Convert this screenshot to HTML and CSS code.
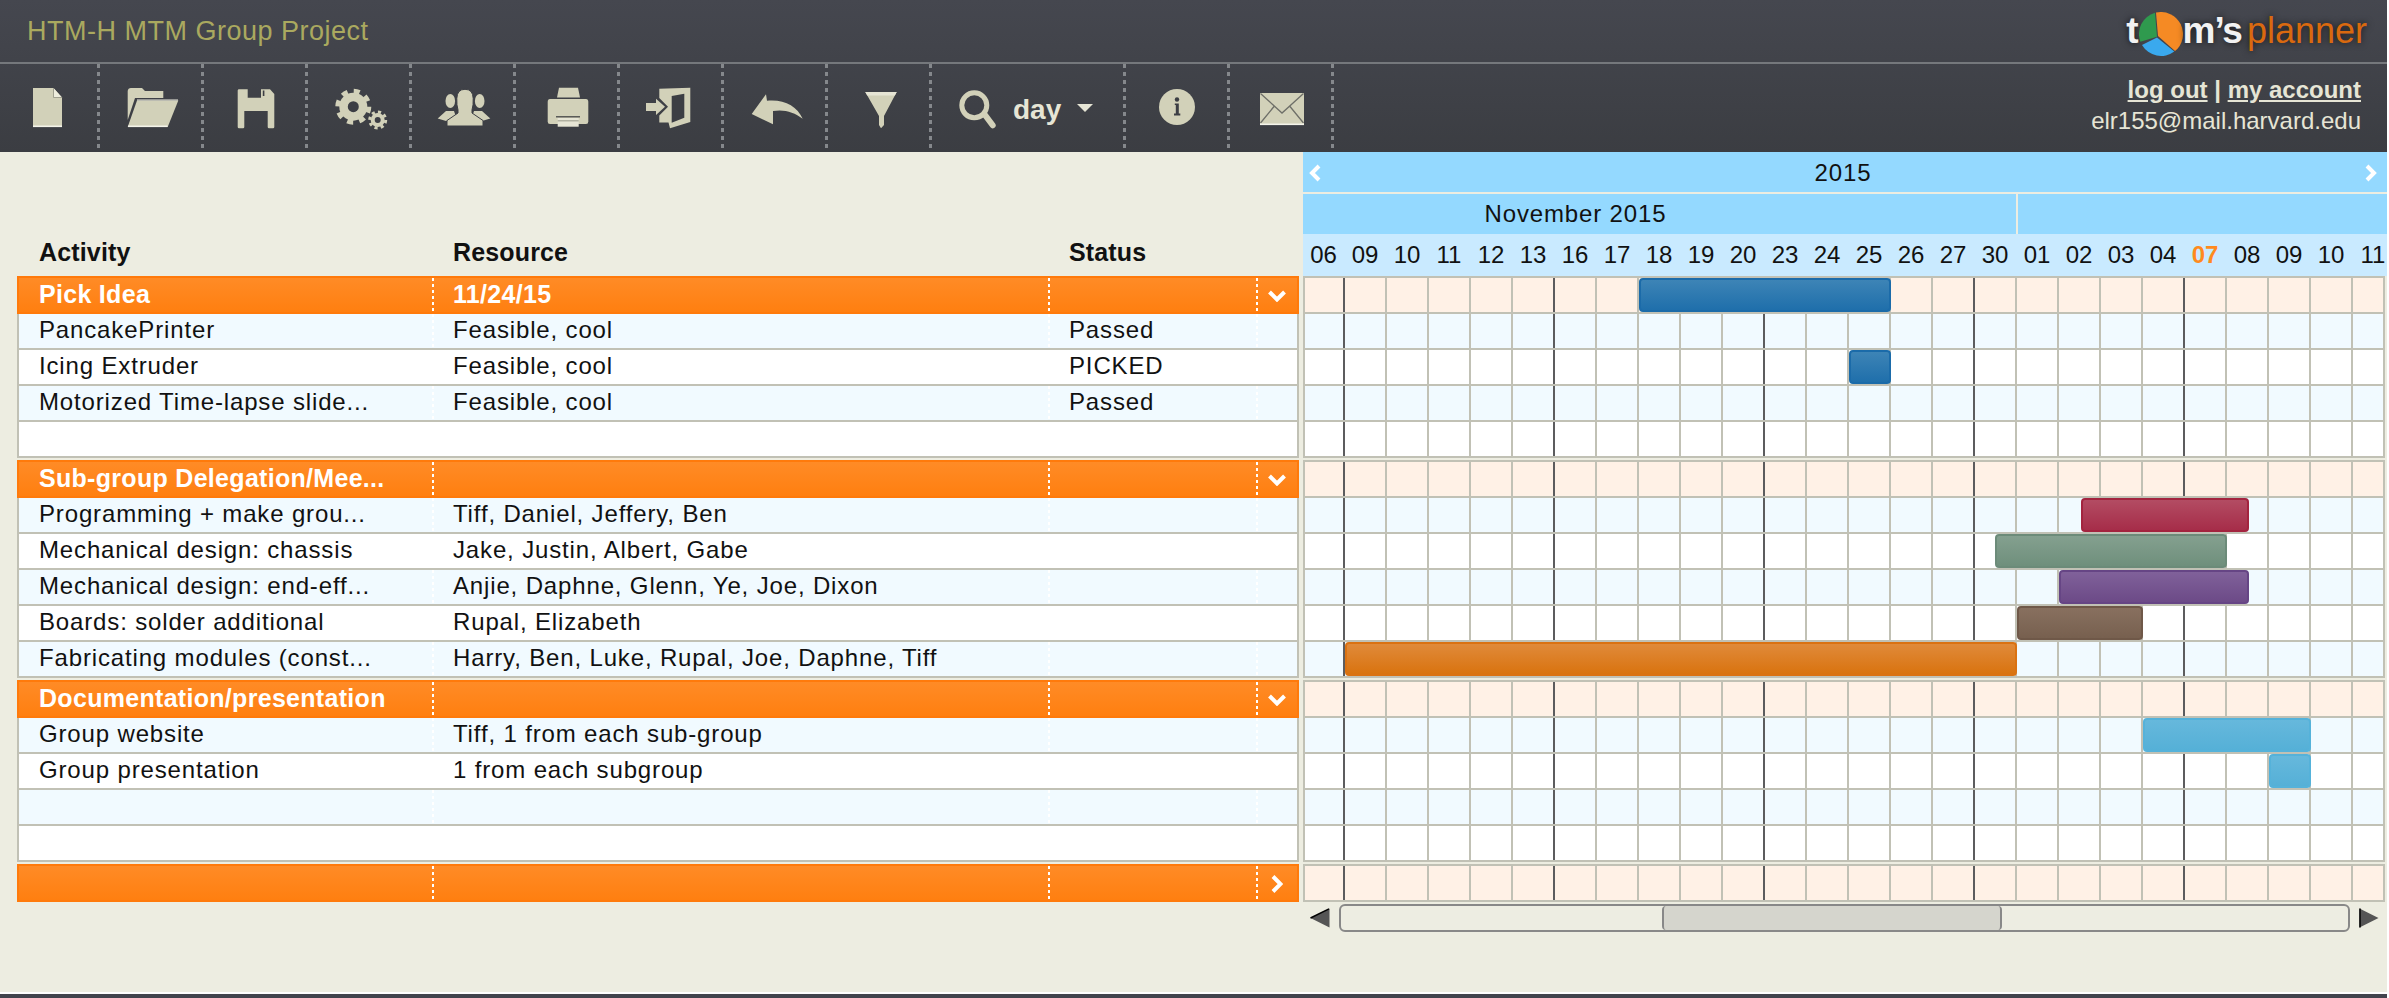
FILE: index.html
```html
<!DOCTYPE html>
<html lang="en">
<head>
    <meta charset="UTF-8">
    <title>HTM-H MTM Group Project</title>
    <link rel="stylesheet" href="styles.css">
</head>
<body>
<div class="page">
    <header class="header">
        <div class="topbar">
            <div class="project-title">HTM-H MTM Group Project</div>
            <div class="logo">
                <span class="logo-t">t</span>
                <svg class="logo-pie" viewBox="0 0 44 44" width="44" height="44">
                    <path d="M18 24.7 L1.4 29.8 A22 22 0 0 1 16 0.8 Z" fill="#2f9a4e"/>
                    <path d="M19 24 L17 0.6 A22 22 0 0 1 36 39 Z" fill="#f58a24"/>
                    <path d="M18 25.5 L35.3 39.5 A22 22 0 0 1 3 33 Z" fill="#3aa9ee"/>
                </svg>
                <span class="logo-m">m’s</span>
                <span class="logo-planner">planner</span>
            </div>
        </div>
        <div class="toolbar">
            <div class="tool tool-first">
                <svg viewBox="0 0 64 48" width="64" height="48">
                    <path class="ic" d="M15 4 H35.5 L44 13.5 V43 H15 Z"/>
                    <path d="M35.5 4 V13.5 H44" fill="#eeeddd" stroke="#8f8f80" stroke-width="0.8"/>
                    <rect x="15" y="41.5" width="29" height="1.6" fill="#f4f4ea"/>
                </svg>
            </div>
            <div class="tool">
                <svg viewBox="0 0 64 48" width="64" height="48">
                    <path class="ic" d="M7.7 7 Q8 4 11 4 H22 L25 7 H43.3 V14 H15 L7.7 36 Z"/>
                    <path class="ic" d="M17 16.5 H58.3 L47.7 43 H7.7 Z"/>
                    <path d="M17 16 H58" stroke="#f0f0e4" stroke-width="1" fill="none"/>
                    <rect x="8" y="41.5" width="39.5" height="1.6" fill="#f4f4ea"/>
                </svg>
            </div>
            <div class="tool">
                <svg viewBox="0 0 64 48" width="64" height="48">
                    <path class="ic" d="M13.7 6.5 Q13.7 5.3 15 5.3 H23.7 V13.7 H37 V5.3 H46 L50.3 10 V43 Q50.3 44.3 49 44.3 H45 Q43.7 44.3 43.7 43 V27 H20.3 V43 Q20.3 44.3 19 44.3 H15 Q13.7 44.3 13.7 43 Z"/>
                    <rect x="38.8" y="6.5" width="1.6" height="5.5" fill="#3c3e44"/>
                </svg>
            </div>
            <div class="tool">
                <svg viewBox="0 0 64 48" width="64" height="48">
                    <circle cx="25.3" cy="22.7" r="15.5" fill="none" stroke="#d2d1b9" stroke-width="5" stroke-dasharray="6 6.17"/>
                    <circle class="ic" cx="25.3" cy="22.7" r="14"/>
                    <circle cx="25.3" cy="22.7" r="5.5" fill="#3c3e44"/>
                    <circle cx="49.7" cy="36" r="8" fill="none" stroke="#d2d1b9" stroke-width="3" stroke-dasharray="3.14 3.14"/>
                    <circle class="ic" cx="49.7" cy="36" r="7"/>
                    <circle cx="49.7" cy="36" r="3" fill="#3c3e44"/>
                </svg>
            </div>
            <div class="tool">
                <svg viewBox="0 0 64 48" width="64" height="48">
                    <ellipse class="ic" cx="18.3" cy="17" rx="4.8" ry="7"/>
                    <ellipse class="ic" cx="47.7" cy="17" rx="4.8" ry="7"/>
                    <path class="ic" d="M5.7 34.5 L14 27 H22 L24 33 L14 37 Z"/>
                    <path class="ic" d="M58.3 34.5 L50 27 H42 L40 33 L50 37 Z"/>
                    <path class="ic" d="M15 42 V36.5 L26 29 V26 Q24.5 21 24.8 14.5 Q25 5.3 33 5.3 Q41 5.3 41.2 14.5 Q41.5 21 40 26 V29 L51 36.5 V42 Z" stroke="#3c3e44" stroke-width="1"/>
                </svg>
            </div>
            <div class="tool">
                <svg viewBox="0 0 64 48" width="64" height="48">
                    <path class="ic" d="M23 3.7 H42 L44 13.5 H21 Z"/>
                    <path class="ic" d="M14 15 H50 Q52.3 15 52.3 18 V37.5 Q52.3 40 50 40 H14 Q11.7 40 11.7 37.5 V18 Q11.7 15 14 15 Z"/>
                    <rect x="20" y="32" width="24" height="1.5" fill="#5a5b58"/>
                    <rect x="21.7" y="34" width="21" height="8.7" fill="#e6e5d5"/>
                    <rect x="21.7" y="36.2" width="21" height="1.2" fill="#a5a594"/>
                </svg>
            </div>
            <div class="tool">
                <svg viewBox="0 0 64 48" width="64" height="48">
                    <path class="ic" d="M19.3 4.7 L50.3 3.7 V38 L30 44.3 L28.5 38.5 H19.3 V31.5 L28 22.7 L19.3 14 Z"/>
                    <path d="M31.7 12 L44.3 9.7 V33.7 L31.7 38.7 Z" fill="#3c3e44"/>
                    <path class="ic" d="M6 19 H16 V14.7 L25 22.7 L16 31 V27 H6 Z"/>
                </svg>
            </div>
            <div class="tool">
                <svg viewBox="0 0 64 48" width="64" height="48">
                    <path class="ic" d="M7.7 30 L22 10.3 L23 16.7 C40 15 53 22 58.7 34.7 C50 28 40 25 29 27 L29 40.3 Z"/>
                </svg>
            </div>
            <div class="tool">
                <svg viewBox="0 0 64 48" width="64" height="48">
                    <path class="ic" d="M17.3 8 H48.7 L36 32 V41 L33 44.3 L31 41 V32 Z"/>
                    <path d="M17.3 8 H48.7 L46.9 11.5 H19.2 Z" fill="#e6e5d5"/>
                </svg>
            </div>
            <div class="tool tool-zoom">
                <svg viewBox="0 0 40 48" width="40" height="48">
                    <circle cx="15.3" cy="21.3" r="12.5" fill="none" stroke="#d2d1b9" stroke-width="5"/>
                    <path d="M26 31 L33.7 41.3" stroke="#d2d1b9" stroke-width="6" stroke-linecap="round"/>
                </svg>
                <span class="zoom-label">day</span>
                <span class="zoom-caret"></span>
            </div>
            <div class="tool">
                <svg viewBox="0 0 64 48" width="64" height="48">
                    <circle class="ic" cx="31" cy="23" r="18"/>
                    <circle cx="31" cy="15.5" r="2.2" fill="#3c3e44"/>
                    <path d="M28.8 19.5 H32.8 V29.5 H34.3 V31.5 H28 V29.5 H29.8 V21 H28.8 Z" fill="#3c3e44"/>
                </svg>
            </div>
            <div class="tool">
                <svg viewBox="0 0 64 48" width="64" height="48">
                    <rect class="ic" x="10" y="9" width="44" height="32"/>
                    <path d="M10.5 9.5 L32 29 L53.5 9.5 M10.5 39 L24 22.5 M53.5 39 L40 22.5" fill="none" stroke="#6e6f68" stroke-width="1.3"/>
                    <rect x="10" y="39.5" width="44" height="1.6" fill="#f4f4ea"/>
                </svg>
            </div>
            <div class="account">
                <div class="account-links"><a href="#">log out</a> | <a href="#">my account</a></div>
                <div class="account-mail">elr155@mail.harvard.edu</div>
            </div>
        </div>
    </header>

    <main class="main">
        <section class="sheet">
            <div class="sheet-head">
                <div class="head-cell head-first">Activity</div>
                <div class="head-cell">Resource</div>
                <div class="head-cell">Status</div>
                <div class="head-cell"></div>
            </div>

            <div class="row group">
                <div class="cell">Pick Idea</div><div class="cell">11/24/15</div><div class="cell"></div>
                <div class="cell cell-toggle"><svg viewBox="0 0 18 12" width="18" height="12"><path class="chev" d="M1.5 2 L9 9.5 L16.5 2"/></svg></div>
            </div>
            <div class="row tint"><div class="cell">PancakePrinter</div><div class="cell">Feasible, cool</div><div class="cell">Passed</div><div class="cell"></div></div>
            <div class="row"><div class="cell">Icing Extruder</div><div class="cell">Feasible, cool</div><div class="cell">PICKED</div><div class="cell"></div></div>
            <div class="row tint"><div class="cell">Motorized Time-lapse slide...</div><div class="cell">Feasible, cool</div><div class="cell">Passed</div><div class="cell"></div></div>
            <div class="row"><div class="cell"></div><div class="cell"></div><div class="cell"></div><div class="cell"></div></div>

            <div class="row group">
                <div class="cell">Sub-group Delegation/Mee...</div><div class="cell"></div><div class="cell"></div>
                <div class="cell cell-toggle"><svg viewBox="0 0 18 12" width="18" height="12"><path class="chev" d="M1.5 2 L9 9.5 L16.5 2"/></svg></div>
            </div>
            <div class="row tint"><div class="cell">Programming + make grou...</div><div class="cell">Tiff, Daniel, Jeffery, Ben</div><div class="cell"></div><div class="cell"></div></div>
            <div class="row"><div class="cell">Mechanical design: chassis</div><div class="cell">Jake, Justin, Albert, Gabe</div><div class="cell"></div><div class="cell"></div></div>
            <div class="row tint"><div class="cell">Mechanical design: end-eff...</div><div class="cell">Anjie, Daphne, Glenn, Ye, Joe, Dixon</div><div class="cell"></div><div class="cell"></div></div>
            <div class="row"><div class="cell">Boards: solder additional</div><div class="cell">Rupal, Elizabeth</div><div class="cell"></div><div class="cell"></div></div>
            <div class="row tint"><div class="cell">Fabricating modules (const...</div><div class="cell">Harry, Ben, Luke, Rupal, Joe, Daphne, Tiff</div><div class="cell"></div><div class="cell"></div></div>

            <div class="row group">
                <div class="cell">Documentation/presentation</div><div class="cell"></div><div class="cell"></div>
                <div class="cell cell-toggle"><svg viewBox="0 0 18 12" width="18" height="12"><path class="chev" d="M1.5 2 L9 9.5 L16.5 2"/></svg></div>
            </div>
            <div class="row tint"><div class="cell">Group website</div><div class="cell">Tiff, 1 from each sub-group</div><div class="cell"></div><div class="cell"></div></div>
            <div class="row"><div class="cell">Group presentation</div><div class="cell">1 from each subgroup</div><div class="cell"></div><div class="cell"></div></div>
            <div class="row tint"><div class="cell"></div><div class="cell"></div><div class="cell"></div><div class="cell"></div></div>
            <div class="row"><div class="cell"></div><div class="cell"></div><div class="cell"></div><div class="cell"></div></div>

            <div class="row group">
                <div class="cell"></div><div class="cell"></div><div class="cell"></div>
                <div class="cell cell-toggle"><svg viewBox="0 0 12 18" width="12" height="18"><path class="chev" d="M2 1.5 L9.5 9 L2 16.5"/></svg></div>
            </div>
        </section>

        <section class="gantt">
            <div class="year">
                <svg viewBox="0 0 12 18" width="12" height="18"><path class="chev" d="M10 2 L3 9 L10 16"/></svg>
                <span>2015</span>
                <svg viewBox="0 0 12 18" width="12" height="18"><path class="chev" d="M2 2 L9 9 L2 16"/></svg>
            </div>
            <div class="months">
                <div class="month month-nov">November 2015</div>
                <div class="month month-dec"></div>
            </div>
            <div class="days">
                <span class="day-first">06</span><span>09</span><span>10</span><span>11</span><span>12</span><span>13</span><span>16</span><span>17</span><span>18</span><span>19</span><span>20</span><span>23</span><span>24</span><span>25</span><span>26</span><span>27</span><span>30</span><span>01</span><span>02</span><span>03</span><span>04</span><span class="today">07</span><span>08</span><span>09</span><span>10</span><span>11</span>
            </div>

            <div class="track group-track"><div class="bar bar-blue" style="left:334px;width:252px"></div></div>
            <div class="track tint"></div>
            <div class="track"><div class="bar bar-blue" style="left:544px;width:42px"></div></div>
            <div class="track tint"></div>
            <div class="track"></div>

            <div class="track group-track"></div>
            <div class="track tint"><div class="bar bar-red" style="left:776px;width:168px"></div></div>
            <div class="track"><div class="bar bar-green" style="left:690px;width:232px"></div></div>
            <div class="track tint"><div class="bar bar-purple" style="left:754px;width:190px"></div></div>
            <div class="track"><div class="bar bar-brown" style="left:712px;width:126px"></div></div>
            <div class="track tint"><div class="bar bar-orange" style="left:40px;width:672px"></div></div>

            <div class="track group-track"></div>
            <div class="track tint"><div class="bar bar-sky" style="left:838px;width:168px"></div></div>
            <div class="track"><div class="bar bar-sky" style="left:964px;width:42px"></div></div>
            <div class="track tint"></div>
            <div class="track"></div>

            <div class="track group-track"></div>

            <div class="scroller">
                <svg class="scroll-arrow" viewBox="0 0 20 20" width="20" height="20">
                    <path d="M0.5 10 L19.5 0.5 V19.5 Z" fill="#555"/>
                    <path d="M0.5 10 L19 0.8" stroke="#000" stroke-width="1.5" fill="none"/>
                </svg>
                <div class="scroll-track"><div class="scroll-handle"></div></div>
                <svg class="scroll-arrow" viewBox="0 0 20 20" width="20" height="20">
                    <path d="M19.5 10 L0.5 0.5 V19.5 Z" fill="#555"/>
                    <path d="M1 0.5 V19.5" stroke="#000" stroke-width="1.5" fill="none"/>
                </svg>
            </div>
        </section>
    </main>
    <div class="page-end"></div>
</div>
</body>
</html>
```

FILE: styles.css
```css
* {
    margin: 0;
    padding: 0;
    box-sizing: border-box;
    font-family: "Liberation Sans", Arial, sans-serif;
}

body {
    background-color: #ffffff;
    overflow: hidden;
}

.page {
    width: 2387px;
    height: 998px;
    background-color: #edede1;
}

/* header */
.header {
    height: 152px;
    background: linear-gradient(to bottom, #45474f, #3b3d42);
}

.topbar {
    height: 64px;
    border-bottom: 2px solid #75787c;
    display: flex;
    justify-content: space-between;
    align-items: center;
    padding: 0 20px 0 27px;
}

.project-title {
    font-size: 27px;
    letter-spacing: 0.5px;
    color: #aaa95f;
}

.logo {
    display: flex;
    align-items: center;
    height: 62px;
    text-shadow: 0 0 7px rgba(0, 0, 0, 0.7);
}

.logo-t,
.logo-m {
    font-size: 37px;
    font-weight: bold;
    color: #f2f2f2;
}

.logo-m {
    letter-spacing: -1px;
    margin-right: 5px;
}

.logo-pie {
    margin-top: 6px;
}

.logo-planner {
    font-size: 36px;
    color: #d9690f;
}

.toolbar {
    height: 88px;
    display: flex;
    align-items: center;
}

.tool {
    width: 104px;
    height: 88px;
    display: flex;
    align-items: center;
    justify-content: center;
    background: repeating-linear-gradient(to bottom, #85888c 0 4px, transparent 4px 8px) right center / 3px 100% no-repeat;
}

.tool-first {
    width: 100px;
}

.tool-zoom {
    width: 194px;
    justify-content: flex-start;
    padding-left: 27px;
}

.ic {
    fill: #d2d1b9;
}

.zoom-label {
    font-size: 28px;
    font-weight: bold;
    color: #e6e5d5;
    margin: 3px 0 0 14px;
}

.zoom-caret {
    margin-left: 16px;
    border-left: 8px solid transparent;
    border-right: 8px solid transparent;
    border-top: 8px solid #e6e5d5;
}

.account {
    margin-left: auto;
    padding: 0 26px 6px 0;
    text-align: right;
    color: #e6e5d5;
    font-size: 24px;
}

.account-links {
    font-weight: bold;
    line-height: 32px;
}

.account-links a {
    color: #e6e5d5;
}

.account-mail {
    line-height: 30px;
}

/* left sheet */
.main {
    display: flex;
    height: 840px;
    padding-left: 17px;
}

.sheet {
    width: 1282px;
    margin-right: 4px;
    font-size: 24px;
    letter-spacing: 0.85px;
    color: #111;
}

.sheet-head,
.row {
    display: grid;
    grid-template-columns: 413px 616px 208px 41px;
}

.sheet-head {
    height: 124px;
    padding: 0 2px;
    align-items: end;
    padding-bottom: 8px;
}

.head-cell {
    font-size: 25px;
    font-weight: bold;
    letter-spacing: 0.15px;
    line-height: 32px;
    padding-left: 21px;
}

.head-first {
    padding-left: 20px;
}

.row {
    height: 36px;
    border: 2px solid #c1c1b5;
    border-top: none;
    background-color: #ffffff;
    line-height: 32px;
}

.row.tint {
    background-color: #f1faff;
}

.cell {
    white-space: nowrap;
    padding-left: 21px;
    background: repeating-linear-gradient(to bottom, #ffffff 0 3px, transparent 3px 6px) left top / 2px 100% no-repeat;
}

.cell:first-child {
    padding-left: 20px;
    background: none;
}

.row.group {
    height: 38px;
    margin-top: 2px;
    border: 2px solid #ff7a0b;
    background: linear-gradient(to bottom, #ff8b26, #ff7f10);
    color: #ffffff;
    font-size: 25px;
    font-weight: bold;
    letter-spacing: 0.3px;
    line-height: 32px;
}

.row.group:nth-child(2) {
    margin-top: 0;
}

.cell-toggle {
    display: flex;
    align-items: center;
    justify-content: center;
    padding-left: 0;
    padding-top: 1px;
}

.chev {
    fill: none;
    stroke: #ffffff;
    stroke-width: 4;
}

/* gantt */
.gantt {
    width: 1084px;
}

.year {
    height: 40px;
    background-color: #94d9ff;
    display: flex;
    justify-content: space-between;
    align-items: center;
    padding: 1px 10px 0 6px;
    font-size: 24px;
    letter-spacing: 0.85px;
    color: #111;
}

.months {
    height: 42px;
    border-top: 2px solid #edede1;
    display: flex;
    font-size: 24px;
    letter-spacing: 0.85px;
    color: #111;
}

.month {
    height: 40px;
    line-height: 40px;
    background-color: #94d9ff;
    text-align: center;
}

.month-nov {
    width: 713px;
    padding-right: 168px;
}

.month-dec {
    flex: 1;
    border-left: 2px solid #edede1;
}

.days {
    height: 42px;
    background-color: #c9eaff;
    display: flex;
    overflow: hidden;
    font-size: 24px;
    line-height: 42px;
    color: #111;
}

.days span {
    flex: 0 0 42px;
    text-align: center;
}

.days .day-first {
    flex-basis: 41px;
}

.days .today {
    font-weight: bold;
    color: #ff8a1e;
}

.track {
    position: relative;
    width: 1082px;
    height: 36px;
    border-left: 2px solid #c1c1b5;
    border-right: 2px solid #c1c1b5;
    border-bottom: 2px solid #c1c1b5;
    background-color: #ffffff;
    background-image:
        repeating-linear-gradient(to right, #5c5c5e 0 2px, transparent 2px 210px),
        repeating-linear-gradient(to right, #c1c1b5 0 2px, transparent 2px 42px);
    background-position: 38px 0, 38px 0;
    background-repeat: no-repeat, no-repeat;
    background-size: 100% 100%, 100% 100%;
}

.track.tint {
    background-color: #f1faff;
}

.track.group-track {
    height: 38px;
    border-top: 2px solid #c1c1b5;
    margin-top: 2px;
    background-color: #fff1e6;
}

.days + .track.group-track {
    margin-top: 0;
}

.bar {
    position: absolute;
    top: 0;
    bottom: 0;
    border-radius: 4px;
    border: 2px solid;
}

.bar-blue {
    background: linear-gradient(to bottom, #3d84b6, #1f6fab);
    border-color: #1b6ba9;
}

.bar-red {
    background: linear-gradient(to bottom, #b34c63, #a62d49);
    border-color: #a3243f;
}

.bar-green {
    background: linear-gradient(to bottom, #84a08f, #6f8f7c);
    border-color: #6c8b79;
}

.bar-purple {
    background: linear-gradient(to bottom, #80619a, #6c4a87);
    border-color: #664585;
}

.bar-brown {
    background: linear-gradient(to bottom, #88705f, #77604f);
    border-color: #6f5848;
}

.bar-orange {
    background: linear-gradient(to bottom, #e08a3a, #d9730f);
    border-color: #da7212;
}

.bar-sky {
    background: linear-gradient(to bottom, #66b8dc, #55b0d7);
    border-color: #55b2da;
}

.scroller {
    display: flex;
    align-items: center;
    height: 28px;
    margin-top: 2px;
    padding-left: 7px;
}

.scroll-arrow {
    flex: none;
}

.scroll-track {
    width: 1011px;
    height: 28px;
    margin: 0 9px;
    border: 2px solid #888888;
    border-radius: 6px;
    background-color: #edede2;
}

.scroll-handle {
    width: 340px;
    height: 24px;
    margin-left: 321px;
    background-color: #d5d5cd;
    border-left: 2px solid #888888;
    border-right: 2px solid #888888;
    border-radius: 4px;
}

.page-end {
    height: 6px;
    background: linear-gradient(to bottom, #ffffff 0 2px, #42444d 2px);
}
```
